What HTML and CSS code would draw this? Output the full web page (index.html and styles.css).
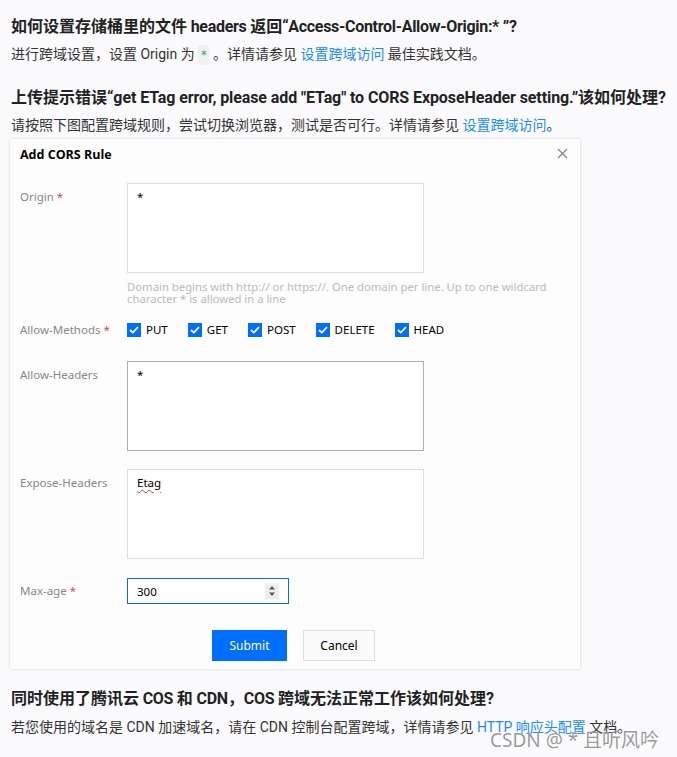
FILE: index.html
```html
<!DOCTYPE html>
<html lang="zh">
<head>
<meta charset="utf-8">
<link rel="stylesheet" href="styles.css">
</head>
<body>
<div class="page">
  <h3 class="q q1">如何设置存储桶里的文件<span class="en"> headers </span>返回<span class="en">“Access-Control-Allow-Origin:* ”?</span></h3>
  <p class="a a1">进行跨域设置，设置 Origin 为 <code class="code">*</code> 。详情请参见 <a class="link">设置跨域访问</a> 最佳实践文档。</p>
  <h3 class="q q2">上传提示错误<span class="en en-wide">“get ETag error, please add "ETag" to CORS ExposeHeader setting.”</span>该如何处理<span class="en">?</span></h3>
  <p class="a a2">请按照下图配置跨域规则，尝试切换浏览器，测试是否可行。详情请参见 <a class="link">设置跨域访问</a>。</p>

  <div class="dialog">
    <div class="dlg-head">
      <span class="dlg-title">Add CORS Rule</span>
      <svg class="close" width="11" height="11" viewBox="0 0 11 11"><path d="M1 1L10 10M10 1L1 10" stroke="#888" stroke-width="1.3" fill="none"/></svg>
    </div>
    <div class="form">
      <div class="row r-origin">
        <div class="label">Origin <span class="req">*</span></div>
        <div class="ctrl">
          <div class="ta">*</div>
          <div class="hint">Domain begins with http:// or https://. One domain per line. Up to one wildcard<br>character * is allowed in a line</div>
        </div>
      </div>
      <div class="row r-methods">
        <div class="label lbl-m">Allow-Methods <span class="req">*</span></div>
        <div class="ctrl checks">
          <span class="chk"><span class="box"><svg width="10" height="8" viewBox="0 0 10 8"><path d="M1 4L3.8 6.6L9 1.2" stroke="#fff" stroke-width="1.8" fill="none"/></svg></span>PUT</span>
          <span class="chk"><span class="box"><svg width="10" height="8" viewBox="0 0 10 8"><path d="M1 4L3.8 6.6L9 1.2" stroke="#fff" stroke-width="1.8" fill="none"/></svg></span>GET</span>
          <span class="chk"><span class="box"><svg width="10" height="8" viewBox="0 0 10 8"><path d="M1 4L3.8 6.6L9 1.2" stroke="#fff" stroke-width="1.8" fill="none"/></svg></span>POST</span>
          <span class="chk"><span class="box"><svg width="10" height="8" viewBox="0 0 10 8"><path d="M1 4L3.8 6.6L9 1.2" stroke="#fff" stroke-width="1.8" fill="none"/></svg></span>DELETE</span>
          <span class="chk"><span class="box"><svg width="10" height="8" viewBox="0 0 10 8"><path d="M1 4L3.8 6.6L9 1.2" stroke="#fff" stroke-width="1.8" fill="none"/></svg></span>HEAD</span>
        </div>
      </div>
      <div class="row r-allow">
        <div class="label">Allow-Headers</div>
        <div class="ctrl"><div class="ta ta-hover">*</div></div>
      </div>
      <div class="row r-expose">
        <div class="label">Expose-Headers</div>
        <div class="ctrl"><div class="ta"><span class="spell">Etag</span></div></div>
      </div>
      <div class="row r-age">
        <div class="label lbl-age">Max-age <span class="req">*</span></div>
        <div class="ctrl">
          <div class="num">
            <span>300</span>
            <span class="spin"><svg width="8" height="12" viewBox="0 0 8 12"><path d="M4 1L7 4.5H1Z M4 11L7 7.5H1Z" fill="#555"/></svg></span>
          </div>
        </div>
      </div>
    </div>
    <div class="dlg-foot">
      <span class="btn btn-primary">Submit</span>
      <span class="btn btn-default">Cancel</span>
    </div>
  </div>

  <h3 class="q q3">同时使用了腾讯云<span class="en"> COS </span>和<span class="en"> CDN</span>，<span class="en">COS </span>跨域无法正常工作该如何处理<span class="en">?</span></h3>
  <p class="a a3">若您使用的域名是 CDN 加速域名，请在 CDN 控制台配置跨域，详情请参见 <a class="link">HTTP 响应头配置</a> 文档。</p>
</div>
<div class="watermark">CSDN @ * 且听风吟</div>
</body>
</html>
```

FILE: styles.css
```css
html, body {
  margin: 0;
  padding: 0;
  background: #fbfbfd;
}
body {
  font-family: Roboto, "Noto Sans CJK SC", sans-serif;
  color: #333;
  width: 677px;
  height: 757px;
  overflow: hidden;
  position: relative;
}
.page {
  display: flex;
  flex-direction: column;
  padding: 0 0 0 11px;
}
.q {
  margin: 0;
  font-size: 16px;
  line-height: 24px;
  font-weight: 700;
  color: #222;
  white-space: nowrap;
}
.en { letter-spacing: -0.3px; }
.en-wide { letter-spacing: -0.1px; }
.a {
  margin: 0;
  font-size: 14px;
  line-height: 22px;
  color: #333;
  white-space: nowrap;
}
.q1 { margin-top: 15px; }
.a1 { margin-top: 4px; }
.q2 { margin-top: 21px; }
.a2 { margin-top: 4px; }
.q3 { margin-top: 18px; }
.a3 { margin-top: 5px; }
.link { color: #1a8cff; text-decoration: none; }
.code {
  display: inline-block;
  font-family: "DejaVu Sans Mono", monospace;
  font-size: 12px;
  color: #29b35a;
  background: #f0f1f3;
  border-radius: 3px;
  padding: 0 2px;
  line-height: 20px;
}

.dialog {
  margin: 3px 0 0 -1px;
  width: 570px;
  height: 530px;
  box-sizing: border-box;
  background: #fdfdfe;
  box-shadow: 0 0 3px rgba(0,0,0,0.18);
  display: flex;
  flex-direction: column;
  font-family: "Noto Sans", "Noto Sans CJK SC", sans-serif;
}
.dlg-head {
  height: 30px;
  display: flex;
  align-items: center;
  justify-content: space-between;
  padding: 0 12px 0 10px;
}
.dlg-title {
  font-family: "Open Sans", sans-serif;
  font-weight: 700;
  font-size: 12.5px;
  color: #000;
}
.close { margin-top: -2px; }
.form {
  display: flex;
  flex-direction: column;
  padding: 14px 0 0 10px;
}
.row {
  display: grid;
  grid-template-columns: 107px 1fr;
}
.label {
  font-size: 11.5px;
  color: #888;
  line-height: 16px;
  padding-top: 6px;
}
.lbl-m { padding-top: 0; line-height: 14px; }
.lbl-age { padding-top: 5px; }
.req { color: #e54545; }
.ctrl { display: flex; flex-direction: column; }
.ta {
  width: 297px;
  height: 90px;
  box-sizing: border-box;
  background: #fff;
  border: 1px solid #ddd;
  padding: 5px 9px;
  font-size: 11.5px;
  line-height: 16px;
  color: #000;
}
.ta-hover { border-color: #b0b0b0; }
.spell {
  text-decoration: underline wavy #e33;
  text-decoration-thickness: 1px;
  text-underline-offset: 2px;
}
.hint {
  margin-top: 8px;
  font-size: 11.3px;
  line-height: 12px;
  color: #bbb;
  white-space: nowrap;
}
.r-methods { margin-top: 18px; height: 14px; }
.checks {
  flex-direction: row;
  align-items: center;
}
.chk {
  display: inline-flex;
  align-items: center;
  font-size: 11.5px;
  color: #000;
  line-height: 14px;
  margin-right: 20px;
}
.box {
  width: 14px;
  height: 14px;
  background: #006eff;
  display: inline-flex;
  align-items: center;
  justify-content: center;
  margin-right: 5px;
}
.r-allow { margin-top: 24px; }
.r-expose { margin-top: 18px; }
.r-age { margin-top: 19px; }
.num {
  width: 162px;
  height: 26px;
  box-sizing: border-box;
  border: 1px solid #006eff;
  background: #fff;
  display: flex;
  align-items: center;
  justify-content: space-between;
  padding: 0 9px 0 9px;
  font-size: 11.5px;
  color: #000;
}
.spin {
  width: 14px;
  height: 16px;
  background: #eee;
  display: inline-flex;
  align-items: center;
  justify-content: center;
}
.dlg-foot {
  margin-top: 26px;
  display: flex;
  justify-content: center;
  gap: 16px;
  padding-right: 3px;
}
.btn {
  height: 31px;
  box-sizing: border-box;
  display: inline-flex;
  align-items: center;
  justify-content: center;
  font-size: 12px;
}
.btn-primary {
  width: 75px;
  background: #006eff;
  color: #fff;
}
.btn-default {
  width: 72px;
  background: #fbfbfb;
  border: 1px solid #ddd;
  color: #000;
}
.watermark {
  position: absolute;
  left: 490px;
  top: 728px;
  font-family: "Noto Sans", "Noto Sans CJK SC", sans-serif;
  font-size: 19px;
  line-height: 24px;
  color: rgba(120,120,120,0.75);
  text-shadow: 0 0 1px rgba(255,255,255,0.8);
  white-space: nowrap;
}
```
